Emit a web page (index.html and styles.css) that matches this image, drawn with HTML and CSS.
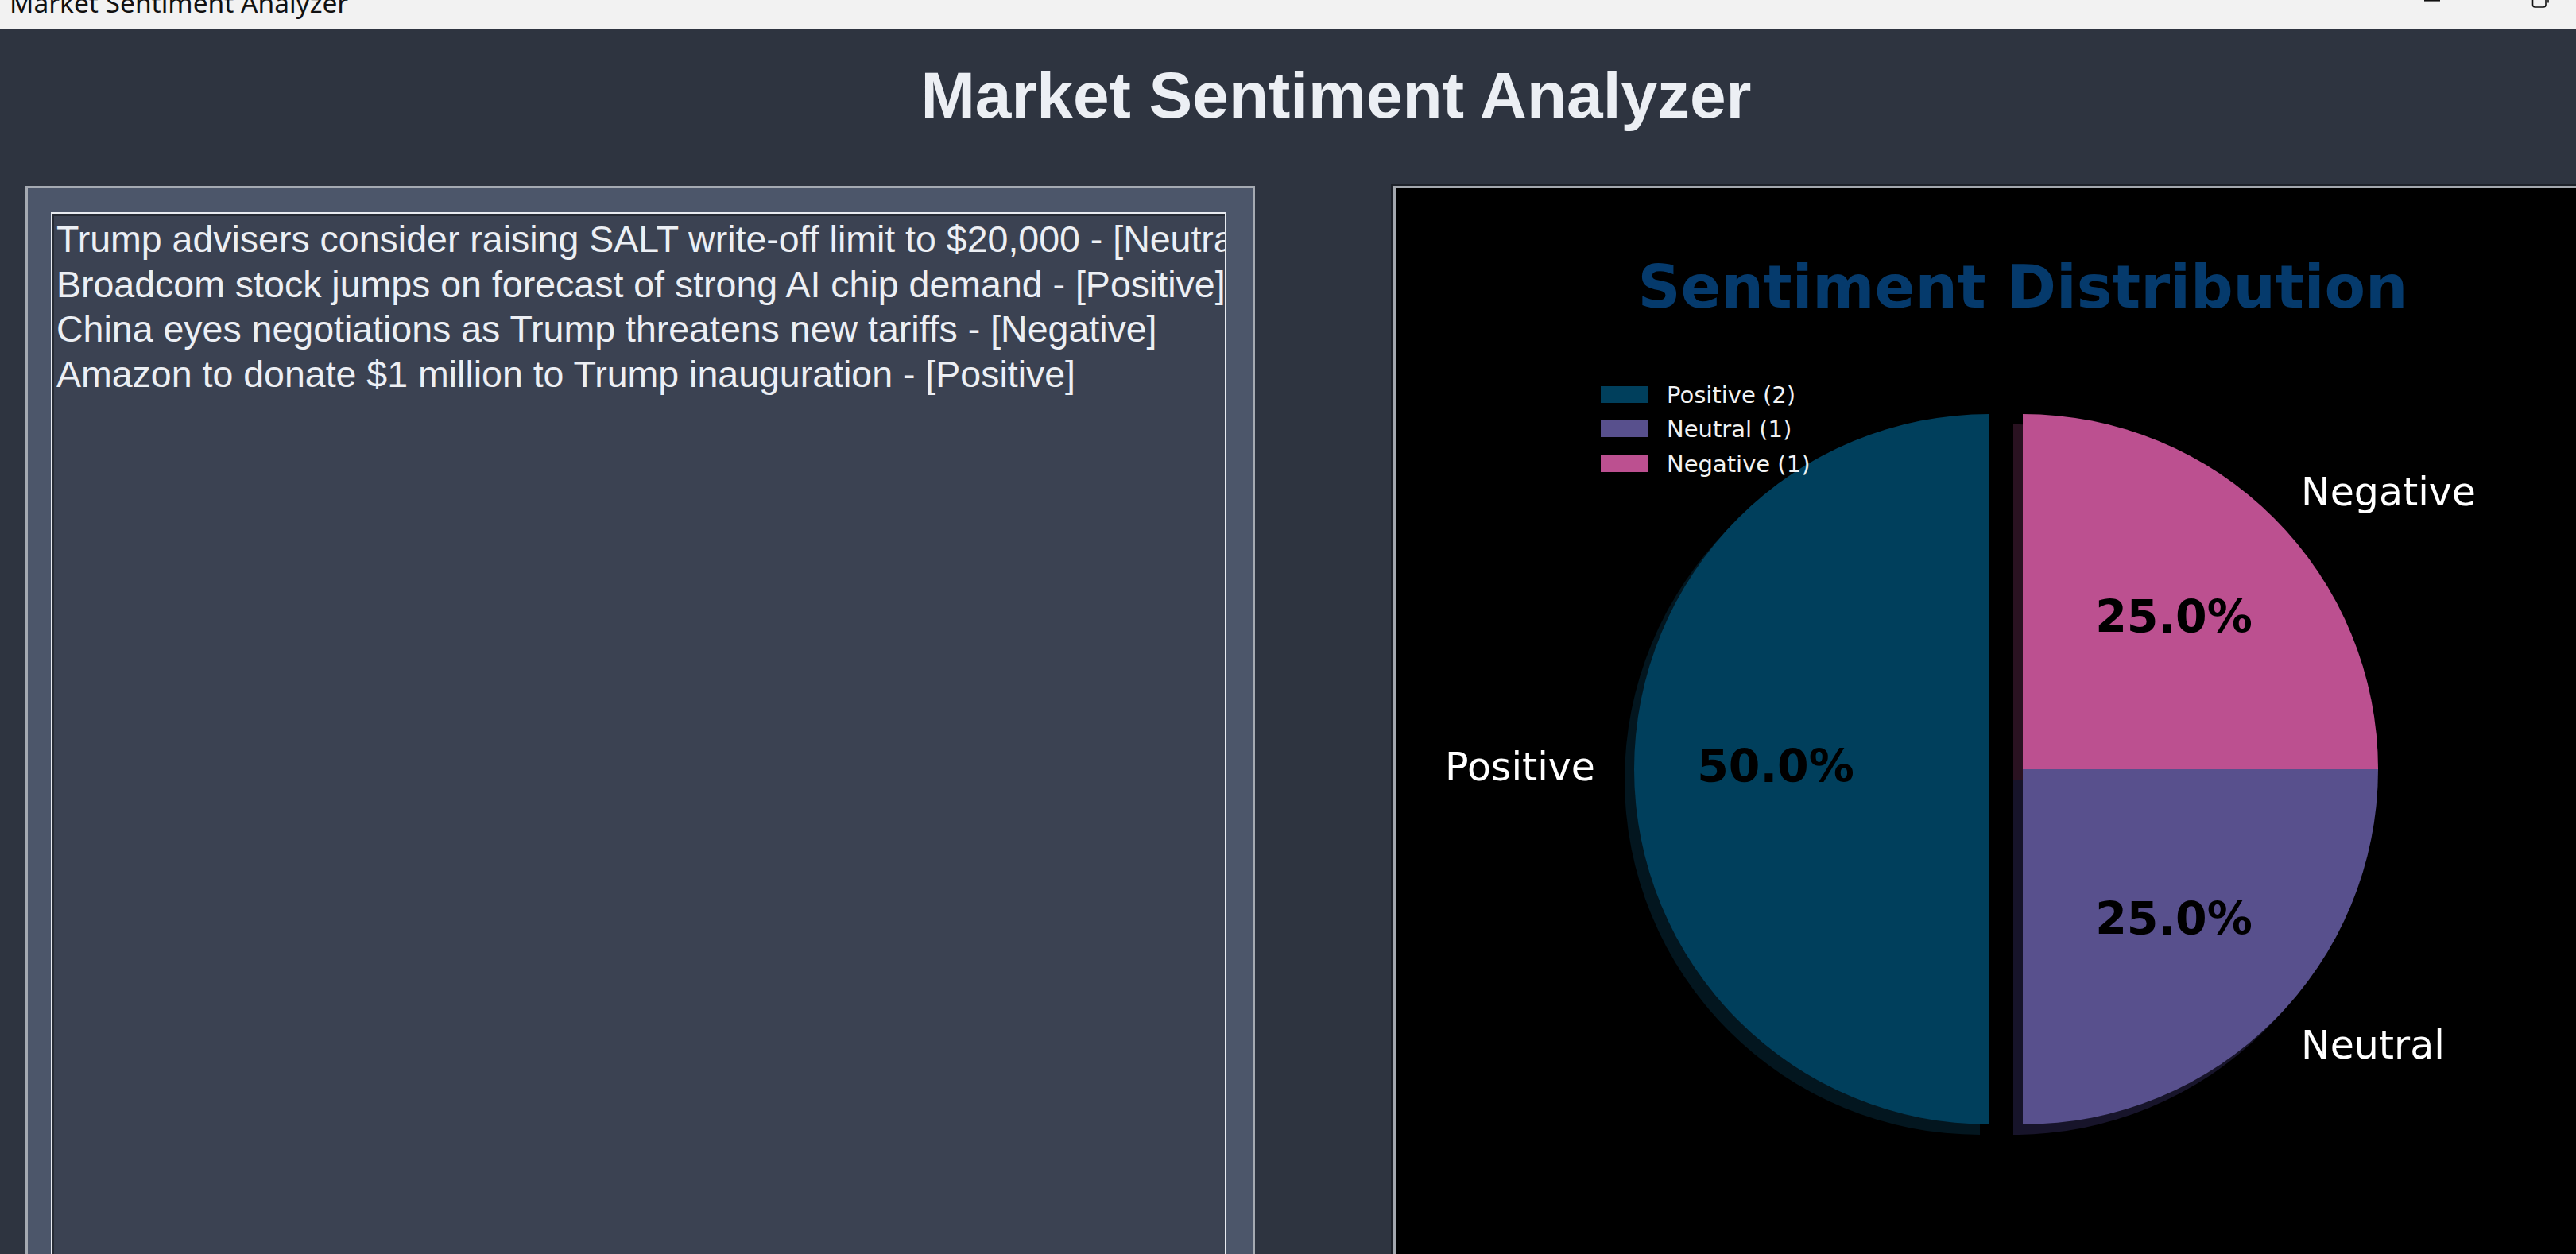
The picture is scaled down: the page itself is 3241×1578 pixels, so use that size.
FILE: index.html
```html
<!DOCTYPE html>
<html lang="en">
<head>
<meta charset="utf-8">
<title>Market Sentiment Analyzer</title>
<link rel="stylesheet" href="styles.css">
</head>
<body>
<div class="window">
  <div class="titlebar">
    <span class="tb-title">Market Sentiment Analyzer</span>
    <div class="tb-controls">
      <div class="tb-btn">
        <svg class="ic-min" width="22" height="4" viewBox="0 0 22 4"><rect x="1" y="0" width="20" height="1.6" fill="#111"/></svg>
      </div>
      <div class="tb-btn">
        <svg class="ic-restore" width="24" height="12" viewBox="0 0 24 12"><path d="M1.5 0 V6 a3 3 0 0 0 3 3 H15 a3 3 0 0 0 3 -3 V0" fill="none" stroke="#111" stroke-width="1.6"/><path d="M21 0 V3.5" fill="none" stroke="#111" stroke-width="1.6"/></svg>
      </div>
      <div class="tb-btn"></div>
    </div>
  </div>

  <h1 class="heading">Market Sentiment Analyzer</h1>

  <div class="panels">
    <section class="news-panel">
      <div class="news-box">
        <div class="news-line">Trump advisers consider raising SALT write-off limit to $20,000 - [Neutral]</div>
        <div class="news-line">Broadcom stock jumps on forecast of strong AI chip demand - [Positive]</div>
        <div class="news-line">China eyes negotiations as Trump threatens new tariffs - [Negative]</div>
        <div class="news-line">Amazon to donate $1 million to Trump inauguration - [Positive]</div>
      </div>
    </section>

    <section class="chart-panel">
      <svg class="chart" width="1577" height="1400" viewBox="1753 234 1577 1400">
        <text class="chart-title" x="2545" y="387" text-anchor="middle">Sentiment Distribution</text>

        <!-- shadows -->
        <path d="M2491 534 A447 447 0 0 0 2491 1428 Z" fill="#03161f"/>
        <path d="M2533 981 L2533 534 A447 447 0 0 1 2980 981 Z" fill="#2a1221"/>
        <path d="M2533 981 L2980 981 A447 447 0 0 1 2533 1428 Z" fill="#17142a"/>

        <!-- wedges -->
        <path d="M2503 521 A447 447 0 0 0 2503 1415 Z" fill="#003f5c"/>
        <path d="M2545 968 L2545 521 A447 447 0 0 1 2992 968 Z" fill="#bc5090"/>
        <path d="M2545 968 L2992 968 A447 447 0 0 1 2545 1415 Z" fill="#58508d"/>

        <!-- labels -->
        <text class="pie-label" x="2007" y="982" text-anchor="end">Positive</text>
        <text class="pie-label" x="2895" y="636">Negative</text>
        <text class="pie-label" x="2895" y="1332">Neutral</text>

        <text class="pct" x="2234" y="984" text-anchor="middle">50.0%</text>
        <text class="pct" x="2735" y="796" text-anchor="middle">25.0%</text>
        <text class="pct" x="2735" y="1176" text-anchor="middle">25.0%</text>

        <!-- legend -->
        <rect x="2014" y="486" width="60" height="21" fill="#003f5c"/>
        <rect x="2014" y="529" width="60" height="21" fill="#58508d"/>
        <rect x="2014" y="573" width="60" height="21" fill="#bc5090"/>
        <text class="legend" x="2097" y="507">Positive (2)</text>
        <text class="legend" x="2097" y="550">Neutral (1)</text>
        <text class="legend" x="2097" y="594">Negative (1)</text>
      </svg>
    </section>
  </div>
</div>
</body>
</html>
```

FILE: styles.css
```css
html, body {
  margin: 0;
  padding: 0;
  background: #2e3440;
  overflow: hidden;
}

body {
  width: 3241px;
  height: 1578px;
}

.window {
  width: 3362px;
  height: 1578px;
  overflow: hidden;
  background: #2e3440;
}

/* window title bar (partly cropped at the top) */
.titlebar {
  height: 36px;
  background: #f2f2f2;
  display: flex;
  align-items: flex-start;
  overflow: hidden;
}

.tb-title {
  font-family: "Noto Sans", "Open Sans", sans-serif;
  font-size: 33.5px;
  line-height: 33.5px;
  color: #111;
  margin-left: 12px;
  margin-top: -13px;
  white-space: nowrap;
}

.tb-controls {
  margin-left: auto;
  margin-right: -40px;
  display: flex;
}

.tb-btn {
  width: 137px;
  height: 36px;
  display: flex;
  justify-content: center;
  align-items: flex-start;
}

.ic-min,
.ic-restore {
  display: block;
}

/* app heading */
.heading {
  margin: 0;
  padding-top: 37px;
  margin-bottom: 64px;
  font-family: "Liberation Sans", Arial, sans-serif;
  font-weight: bold;
  font-size: 82px;
  line-height: 94px;
  color: #eceff4;
  text-align: center;
}

/* panels */
.panels {
  display: flex;
  align-items: flex-start;
  padding-left: 32px;
  gap: 171px;
}

.news-panel {
  flex: none;
  margin-top: 3px;
  width: 1547px;
  height: 1400px;
  box-sizing: border-box;
  border: 3px solid #a5aab2;
  background: #4c566a;
  padding: 30px 33px 0 29px;
}

.news-box {
  height: 1400px;
  box-sizing: border-box;
  border: 2px solid #e8ebf0;
  background: #3b4252;
  box-shadow: inset 2px 3px 0 #262b35;
  padding: 4px 0 0 5px;
  overflow: hidden;
}

.news-line {
  font-family: "Liberation Sans", Arial, sans-serif;
  font-size: 46.5px;
  line-height: 56.5px;
  color: #eceff4;
  white-space: nowrap;
}

.chart-panel {
  flex: none;
  border: 3px solid #1d2129;
  background: #000;
  box-shadow: inset 3px 3px 0 #a3a7ae;
}

.chart {
  display: block;
}

.chart-title {
  font-family: "DejaVu Sans", sans-serif;
  font-weight: bold;
  font-size: 75px;
  fill: #053a6c;
}

.pie-label {
  font-family: "DejaVu Sans", sans-serif;
  font-size: 49px;
  fill: #ffffff;
}

.pct {
  font-family: "DejaVu Sans", sans-serif;
  font-weight: bold;
  font-size: 57px;
  fill: #000000;
}

.legend {
  font-family: "DejaVu Sans", sans-serif;
  font-size: 29px;
  fill: #f2f2f2;
}
```
